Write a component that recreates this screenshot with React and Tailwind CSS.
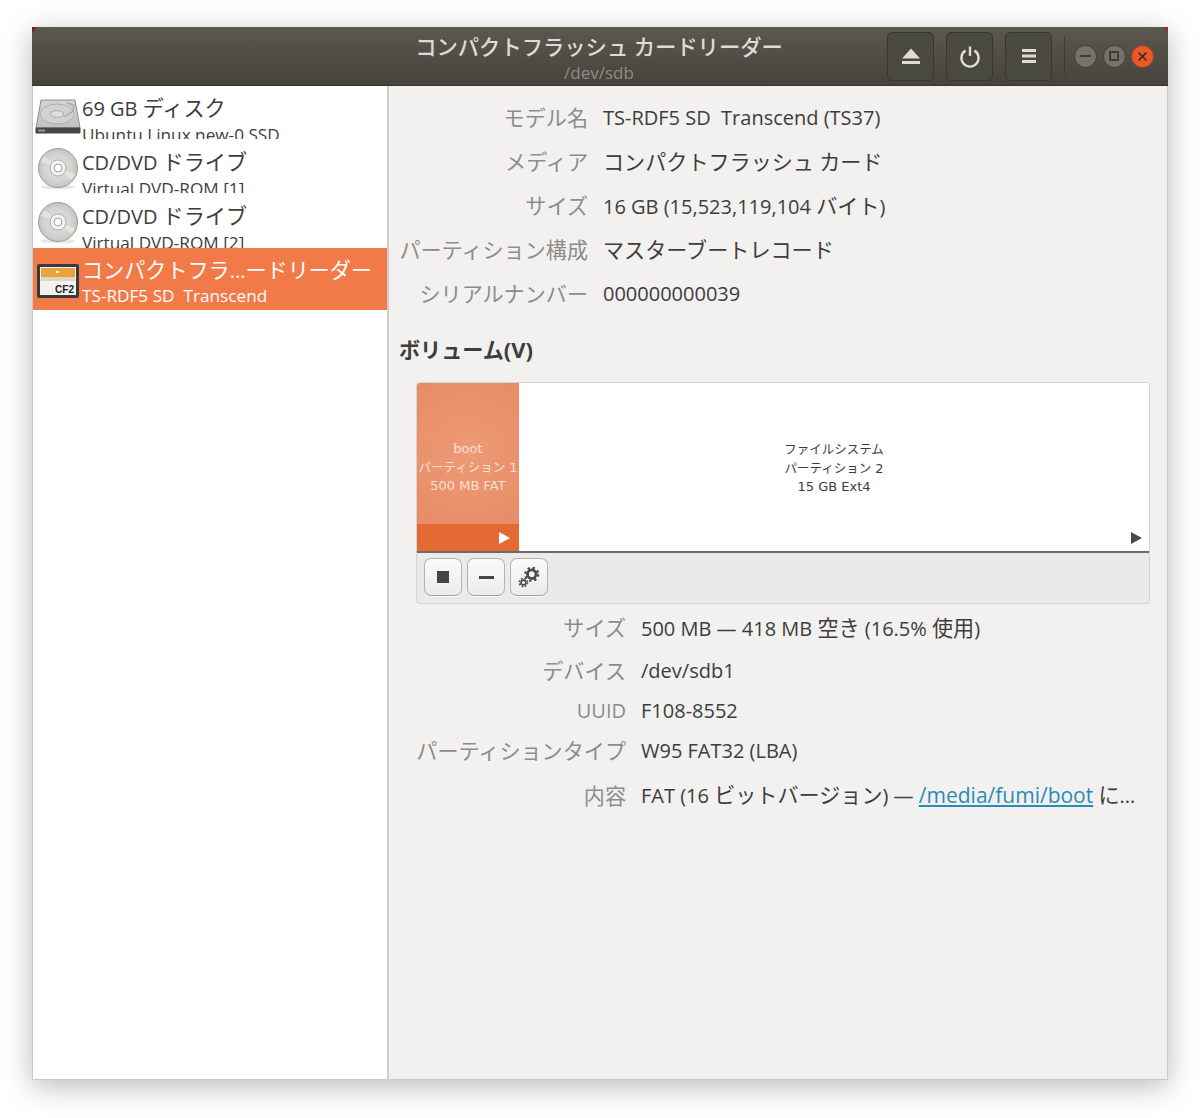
const T = ({ children }) => {
  const parts = String(children).split(/([\u3000-\u30ff\u4e00-\u9fff]+)/);
  return (
    <>
      {parts.map((p, i) => (i % 2 ? <span key={i} className="text-[1.055em]">{p}</span> : <span key={i}>{p}</span>))}
    </>
  );
};
const Eject = () => (
  <svg width="22" height="22" viewBox="0 0 22 22"><path d="M11 3.5 L20 13.5 H2 Z" fill="#dfdbd2"/><rect x="2" y="16" width="18" height="3" fill="#dfdbd2"/></svg>
);
const Power = () => (
  <svg width="24" height="24" viewBox="0 0 24 24" fill="none" stroke="#dfdbd2" strokeWidth="2.4"><path d="M7.6 6.6 A8.6 8.6 0 1 0 16.4 6.6"/><path d="M12 2.5 V12"/></svg>
);
const Menu = () => (
  <svg width="18" height="18" viewBox="0 0 18 18"><rect x="2" y="2" width="14" height="3" fill="#dfdbd2"/><rect x="2" y="7.5" width="14" height="3" fill="#dfdbd2"/><rect x="2" y="13" width="14" height="3" fill="#dfdbd2"/></svg>
);
const Hdd = () => (
  <svg width="46" height="36" viewBox="0 0 46 36" className="mt-[13px]">
    <defs><linearGradient id="h" x1="0" y1="0" x2="0" y2="1"><stop offset="0" stopColor="#d4d4d2"/><stop offset="1" stopColor="#c2c2c0"/></linearGradient></defs>
    <path d="M6 1 H40 L45 29 H1 Z" fill="url(#h)" stroke="#8f8f8d"/>
    <ellipse cx="22" cy="15" rx="17" ry="10" fill="#d2d2d0" stroke="#b0b0ae"/>
    <ellipse cx="22" cy="15" rx="6.5" ry="3.4" fill="#e0e0de" stroke="#aaaaa8"/>
    <path d="M32 4 L39 6 L38 12 L29 18" fill="none" stroke="#a8a8a6" strokeWidth="1.4"/>
    <rect x="0.5" y="28.5" width="45" height="6" rx="1" fill="#454545"/>
    <rect x="3" y="30.5" width="7" height="2" fill="#9a9a9a"/>
  </svg>
);
const Disc = ({ id }) => (
  <svg width="44" height="44" viewBox="0 0 44 44" className="mt-[8px]">
    <defs>
      <radialGradient id={id} cx="0.5" cy="0.5" r="0.5"><stop offset="0" stopColor="#e4e4e2"/><stop offset="0.7" stopColor="#d3d3d1"/><stop offset="1" stopColor="#c4c4c2"/></radialGradient>
    </defs>
    <ellipse cx="22" cy="40" rx="17" ry="2.5" fill="#00000018"/>
    <circle cx="22" cy="21" r="19.5" fill={`url(#${id})`} stroke="#9d9d9b"/>
    <path d="M22 21 L9 9 A18 18 0 0 0 5 15 Z" fill="#e6dfe8"/>
    <path d="M22 21 L35 33 A18 18 0 0 0 39 27 Z" fill="#e9e4d8"/>
    <circle cx="22" cy="21" r="8" fill="#f4f4f3" stroke="#adadab"/>
    <circle cx="22" cy="21" r="4" fill="#fff" stroke="#a0a09e"/>
  </svg>
);
const Cf = () => (
  <svg width="44" height="36" viewBox="0 0 44 36">
    <rect x="1" y="1" width="42" height="34" rx="2" fill="#3a3a3a"/>
    <rect x="4" y="4" width="36" height="28" fill="#f2f2f0"/>
    <rect x="5" y="5" width="34" height="9" fill="#e8a33d"/>
    <rect x="5" y="14" width="34" height="4" fill="#ddd6c4"/>
    <rect x="20" y="8" width="3" height="2" fill="#fff"/>
    <text x="38" y="29.5" textAnchor="end" fontFamily="'Liberation Sans',sans-serif" fontWeight="700" fontSize="10" fill="#222">CF2</text>
  </svg>
);
const Gears = () => (
  <svg width="24" height="24" viewBox="0 0 26 26" fill="none" stroke="#4a4a4a">
    <circle cx="16" cy="10" r="4.6" strokeWidth="3"/>
    <circle cx="16" cy="10" r="7" strokeWidth="2.4" strokeDasharray="2.6 2.9"/>
    <circle cx="7" cy="19" r="2.6" strokeWidth="1.8"/>
    <circle cx="7" cy="19" r="4.4" strokeWidth="1.8" strokeDasharray="1.8 1.7"/>
  </svg>
);

function Row({ icon, title, sub, selected, rowClass, textClass }) {
  return (
    <div className={`flex overflow-hidden ${rowClass}`}>
      <div className={`w-[49px] shrink-0 flex justify-center items-start ${selected ? "pt-[15px]" : ""}`}>{icon}</div>
      <div className={`min-w-0 ${textClass}`}>
        <div className="text-[20px] leading-[30px] whitespace-pre"><T>{title}</T></div>
        <div className={`text-[17.2px] leading-[20px] whitespace-pre ${selected ? "" : "mt-[1px]"}`}>{sub}</div>
      </div>
    </div>
  );
}
function HeadBtn({ children }) {
  return <div className="w-[47px] h-[49px] rounded-[5px] border border-[#37362f] bg-[#4a4941] flex items-center justify-center">{children}</div>;
}
function Tool({ children }) {
  return <div className="w-[38px] h-[38px] rounded-[7px] border border-[#b5b3ae] border-b-[#a3a19c] bg-gradient-to-b from-[#fbfbfa] to-[#ecebe8] flex items-center justify-center shadow-[0_1px_0_#fff]">{children}</div>;
}
const Prop = ({ k, v, h, labelW }) => (
  <div className="flex items-center gap-[15px] whitespace-pre" style={{ height: h }}>
    <div className="text-[#8c8c8c] text-right shrink-0" style={{ width: labelW }}><T>{k}</T></div>
    <div className="text-[#3d3d3d]">{typeof v === "string" ? <T>{v}</T> : v}</div>
  </div>
);
const Tri = ({ color }) => (
  <svg width="11" height="12" viewBox="0 0 11 12"><path d="M0 0 L11 6 L0 12 Z" fill={color}/></svg>
);
const Small = ({ children }) => {
  const parts = String(children).split(/([\u3000-\u30ff\u4e00-\u9fff]+)/);
  return (
    <div>
      {parts.map((p, i) => (i % 2 ? <span key={i} className="text-[12.5px] font-['Noto_Sans_CJK_JP',sans-serif]">{p}</span> : <span key={i}>{p}</span>))}
    </div>
  );
};

export default function App() {
  return (
    <div className="w-[1200px] h-[1118px] bg-white pt-[27px] pl-[32px] font-['Open_Sans','Noto_Sans_CJK_JP',sans-serif]">
      <div className="relative w-[1136px] h-[1053px] flex flex-col overflow-hidden shadow-[0_6px_28px_rgba(0,0,0,0.28)] border-b border-[#c9c9c7]">
        <div className="h-[59px] shrink-0 bg-gradient-to-b from-[#5b584f] to-[#45433c] border-b border-[#35342e] relative flex items-center">
          <div className="absolute left-0 top-0 w-0 h-0 border-t-[5px] border-r-[5px] border-t-[#7a1e22] border-r-transparent"></div>
          <div className="absolute right-0 top-0 w-0 h-0 border-t-[5px] border-l-[5px] border-t-[#a3301c] border-l-transparent"></div>
          <div className="absolute left-0 right-0 top-[6px] text-center pr-[2px]">
            <div className="text-[21.3px] leading-[28px] text-[#dfdbd2] font-medium">コンパクトフラッシュ カードリーダー</div>
            <div className="text-[17px] leading-[24px] text-[#8f8c84]">/dev/sdb</div>
          </div>
          <div className="ml-auto flex items-center pr-[14px] relative">
            <div className="flex gap-[12px] mr-[12px]">
              <HeadBtn><Eject /></HeadBtn>
              <HeadBtn><Power /></HeadBtn>
              <HeadBtn><Menu /></HeadBtn>
            </div>
            <div className="w-px h-[38px] bg-[#3c3b34] mr-[9px]"></div>
            <div className="flex gap-[5.5px]">
              <div className="w-[23px] h-[23px] rounded-full bg-[#74726b] border border-[#3f3e38] flex items-center justify-center"><div className="w-[11px] h-[2px] bg-[#3d3c36]"></div></div>
              <div className="w-[23px] h-[23px] rounded-full bg-[#74726b] border border-[#3f3e38] flex items-center justify-center"><div className="w-[10px] h-[10px] border-2 border-[#3d3c36]"></div></div>
              <div className="w-[23px] h-[23px] rounded-full bg-[#e9572a] border border-[#a33f20] flex items-center justify-center">
                <svg width="11" height="11" viewBox="0 0 11 11" stroke="#3a2a22" strokeWidth="1.6"><path d="M1.5 1.5 L9.5 9.5 M9.5 1.5 L1.5 9.5"/></svg>
              </div>
            </div>
          </div>
        </div>
        <div className="flex-1 flex min-h-0">
          <div className="w-[357px] shrink-0 bg-white border-l border-[#c9c9c7] border-r-[2px] border-r-[#cdcdcb] text-[#3d3d3d]">
            <Row rowClass="h-[53px]" textClass="pt-[7px]" icon={<Hdd />} title="69 GB ディスク" sub="Ubuntu Linux new-0 SSD" />
            <Row rowClass="h-[54px]" textClass="pt-[8px]" icon={<Disc id="d1" />} title="CD/DVD ドライブ" sub="Virtual DVD-ROM [1]" />
            <Row rowClass="h-[55px]" textClass="pt-[8px]" icon={<Disc id="d2" />} title="CD/DVD ドライブ" sub="Virtual DVD-ROM [2]" />
            <Row selected rowClass="h-[62px] bg-[#f27a49] text-white" textClass="pt-[7px]" icon={<Cf />} title="コンパクトフラ...ードリーダー" sub="TS-RDF5 SD  Transcend" />
          </div>
          <div className="flex-1 min-w-0 bg-[#f2f1f0] border-r border-[#c9c9c7] text-[20px] pl-[10px]">
            <div className="pt-[10px]">
              <Prop labelW={189} h={44} k="モデル名" v="TS-RDF5 SD  Transcend (TS37)" />
              <Prop labelW={189} h={44} k="メディア" v="コンパクトフラッシュ カード" />
              <Prop labelW={189} h={44} k="サイズ" v="16 GB (15,523,119,104 バイト)" />
              <Prop labelW={189} h={44} k="パーティション構成" v="マスターブートレコード" />
              <Prop labelW={189} h={44} k="シリアルナンバー" v="000000000039" />
            </div>
            <div className="font-bold text-[#3d3d3d] leading-[30px] mt-[18px]"><T>ボリューム</T><span className="text-[22px]">(V)</span></div>
            <div className="ml-[17px] mt-[16px] w-[734px] h-[222px] rounded-[4px] border border-[#d5d3cf] bg-[#eaeae8] overflow-hidden">
              <div className="h-[170px] flex border-b-2 border-[#6b6b6b] bg-white text-[13px] leading-[18px] text-center font-['DejaVu_Sans',sans-serif]">
                <div className="w-[102px] shrink-0 flex flex-col">
                  <div className="flex-1 bg-[radial-gradient(circle,#ee9a76,#e68c66)] text-[#fbe0d2] flex flex-col justify-center pt-[27px] whitespace-nowrap">
                    <Small>boot</Small><Small>パーティション 1</Small><Small>500 MB FAT</Small>
                  </div>
                  <div className="h-[27px] bg-[#e46a33] flex items-center justify-end pr-[9px]"><Tri color="#ffffff" /></div>
                </div>
                <div className="flex-1 flex flex-col text-[#3d3d3d]">
                  <div className="flex-1 flex flex-col justify-center pt-[29px]">
                    <Small>ファイルシステム</Small><Small>パーティション 2</Small><Small>15 GB Ext4</Small>
                  </div>
                  <div className="h-[27px] flex items-center justify-end pr-[7px]"><Tri color="#4a4a4a" /></div>
                </div>
              </div>
              <div className="flex gap-[5px] pl-[7px] pt-[5px]">
                <Tool><div className="w-[12px] h-[12px] bg-[#454545]"></div></Tool>
                <Tool><div className="w-[15px] h-[3px] bg-[#454545]"></div></Tool>
                <Tool><Gears /></Tool>
              </div>
            </div>
            <div className="mt-[1px]">
              <Prop labelW={227} h={45} k="サイズ" v="500 MB — 418 MB 空き (16.5% 使用)" />
              <Prop labelW={227} h={41} k="デバイス" v="/dev/sdb1" />
              <Prop labelW={227} h={39} k="UUID" v="F108-8552" />
              <Prop labelW={227} h={41} k="パーティションタイプ" v="W95 FAT32 (LBA)" />
              <Prop labelW={227} h={49} k="内容" v={<span><T>FAT (16 ビットバージョン) — </T><span className="text-[#2a8cb5] underline text-[21px]">/media/fumi/boot</span><T> に...</T></span>} />
            </div>
          </div>
        </div>
      </div>
    </div>
  );
}
